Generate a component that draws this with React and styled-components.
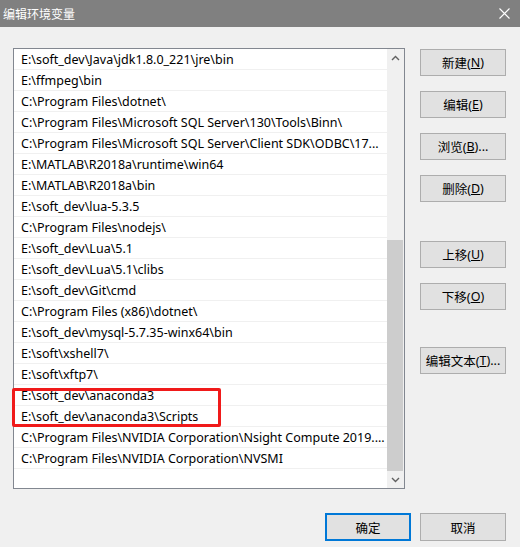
import React from "react";
import styled, { createGlobalStyle } from "styled-components";

const GlobalStyle = createGlobalStyle`
  html, body {
    margin: 0;
    padding: 0;
    background: #f0f0f0;
  }
  body {
    font-family: "Noto Sans", "Noto Sans CJK SC", sans-serif;
    font-size: 12px;
    color: #000;
  }
`;

const Window = styled.div`
  width: 520px;
  height: 547px;
  background: #f0f0f0;
  display: flex;
  flex-direction: column;
  overflow: hidden;
`;

const TitleBar = styled.div`
  height: 27px;
  background: #808080;
  color: #fff;
  display: flex;
  align-items: center;
  justify-content: space-between;
  padding-left: 3px;
  font-size: 12px;
  font-family: "Noto Sans CJK SC", sans-serif;
`;

const CloseGlyph = styled.svg`
  width: 11px;
  height: 11px;
  margin-right: 10px;
`;

const Body = styled.div`
  display: flex;
  gap: 15px;
  padding: 21px 14px 0 13px;
`;

const ListBox = styled.div`
  width: 392px;
  height: 441px;
  box-sizing: border-box;
  border: 1px solid #828790;
  background: #fff;
  display: flex;
`;

const Rows = styled.div`
  flex: 1;
  min-width: 0;
  display: flex;
  flex-direction: column;
`;

const Row = styled.div`
  height: 21px;
  box-sizing: border-box;
  border-bottom: 1px solid #f0f0f0;
  padding: 0 0 0 7px;
  font-size: 12.5px;
  line-height: 21px;
  white-space: nowrap;
  overflow: hidden;
`;

const Marked = styled.div`
  position: relative;
  display: flex;
  flex-direction: column;

  &::after {
    content: "";
    position: absolute;
    top: 3px;
    left: -2px;
    width: 209px;
    height: 39px;
    box-sizing: border-box;
    border: 3px solid #f01a1a;
    border-radius: 2px;
    pointer-events: none;
  }
`;

const ScrollBar = styled.div`
  width: 17px;
  background: #f0f0f0;
  display: flex;
  flex-direction: column;
`;

const ScrollArrow = styled.div`
  height: 17px;
  display: flex;
  align-items: center;
  justify-content: center;
`;

const Track = styled.div`
  flex: 1;
  display: flex;
  flex-direction: column;
  justify-content: flex-end;
`;

const Thumb = styled.div`
  height: 231px;
  margin: 0 1px 0 0;
  background: #cdcdcd;
`;

const ButtonColumn = styled.div`
  display: flex;
  flex-direction: column;
  gap: 15px;
  padding-top: 1px;
`;

const Button = styled.button`
  width: 86px;
  height: ${(p) => p.$h || 27}px;
  margin: 0;
  margin-top: ${(p) => p.$gapAbove || 0}px;
  padding: 0;
  box-sizing: border-box;
  background: #e1e1e1;
  border: ${(p) => (p.$primary ? "2px solid #0078d7" : "1px solid #adadad")};
  font-family: "Noto Sans", "Noto Sans CJK SC", sans-serif;
  font-size: 12.5px;
  color: #000;
  display: flex;
  align-items: center;
  justify-content: center;
  white-space: nowrap;

  u {
    text-decoration: underline;
    text-underline-offset: 1px;
  }
`;

const Footer = styled.div`
  display: flex;
  justify-content: flex-end;
  gap: 9px;
  padding: 24px 14px 0 0;
`;

const Chevron = ({ up }) => (
  <svg width="9" height="6" viewBox="0 0 9 6">
    <polyline
      points={up ? "1,5 4.5,1.5 8,5" : "1,1 4.5,4.5 8,1"}
      fill="none"
      stroke="#606060"
      strokeWidth="1.4"
    />
  </svg>
);

const paths = [
  "E:\\soft_dev\\Java\\jdk1.8.0_221\\jre\\bin",
  "E:\\ffmpeg\\bin",
  "C:\\Program Files\\dotnet\\",
  "C:\\Program Files\\Microsoft SQL Server\\130\\Tools\\Binn\\",
  "C:\\Program Files\\Microsoft SQL Server\\Client SDK\\ODBC\\17...",
  "E:\\MATLAB\\R2018a\\runtime\\win64",
  "E:\\MATLAB\\R2018a\\bin",
  "E:\\soft_dev\\lua-5.3.5",
  "C:\\Program Files\\nodejs\\",
  "E:\\soft_dev\\Lua\\5.1",
  "E:\\soft_dev\\Lua\\5.1\\clibs",
  "E:\\soft_dev\\Git\\cmd",
  "C:\\Program Files (x86)\\dotnet\\",
  "E:\\soft_dev\\mysql-5.7.35-winx64\\bin",
  "E:\\soft\\xshell7\\",
  "E:\\soft\\xftp7\\",
];

const anaconda = [
  "E:\\soft_dev\\anaconda3",
  "E:\\soft_dev\\anaconda3\\Scripts",
];

const tail = [
  "C:\\Program Files\\NVIDIA Corporation\\Nsight Compute 2019....",
  "C:\\Program Files\\NVIDIA Corporation\\NVSMI",
];

const sideButtons = [
  { label: "新建", key: "N", gap: 0 },
  { label: "编辑", key: "E", gap: 0 },
  { label: "浏览", key: "B", more: true, gap: 0 },
  { label: "删除", key: "D", gap: 0 },
  { label: "上移", key: "U", gap: 24 },
  { label: "下移", key: "O", gap: 0 },
  { label: "编辑文本", key: "T", more: true, gap: 22 },
];

export default function App() {
  return (
    <>
      <GlobalStyle />
      <Window>
        <TitleBar>
          <span>编辑环境变量</span>
          <CloseGlyph viewBox="0 0 11 11">
            <path d="M0.5 0.5 L10.5 10.5 M10.5 0.5 L0.5 10.5" stroke="#fff" strokeWidth="1.1" />
          </CloseGlyph>
        </TitleBar>
        <Body>
          <ListBox>
            <Rows>
              {paths.map((p) => (
                <Row key={p}>{p}</Row>
              ))}
              <Marked>
                {anaconda.map((p) => (
                  <Row key={p}>{p}</Row>
                ))}
              </Marked>
              {tail.map((p) => (
                <Row key={p}>{p}</Row>
              ))}
            </Rows>
            <ScrollBar>
              <ScrollArrow>
                <Chevron up />
              </ScrollArrow>
              <Track>
                <Thumb />
              </Track>
              <ScrollArrow>
                <Chevron />
              </ScrollArrow>
            </ScrollBar>
          </ListBox>
          <ButtonColumn>
            {sideButtons.map((b) => (
              <Button key={b.key} $gapAbove={b.gap}>
                {b.label}(<u>{b.key}</u>){b.more ? "..." : ""}
              </Button>
            ))}
          </ButtonColumn>
        </Body>
        <Footer>
          <Button $primary $h={28}>确定</Button>
          <Button $h={28}>取消</Button>
        </Footer>
      </Window>
    </>
  );
}
